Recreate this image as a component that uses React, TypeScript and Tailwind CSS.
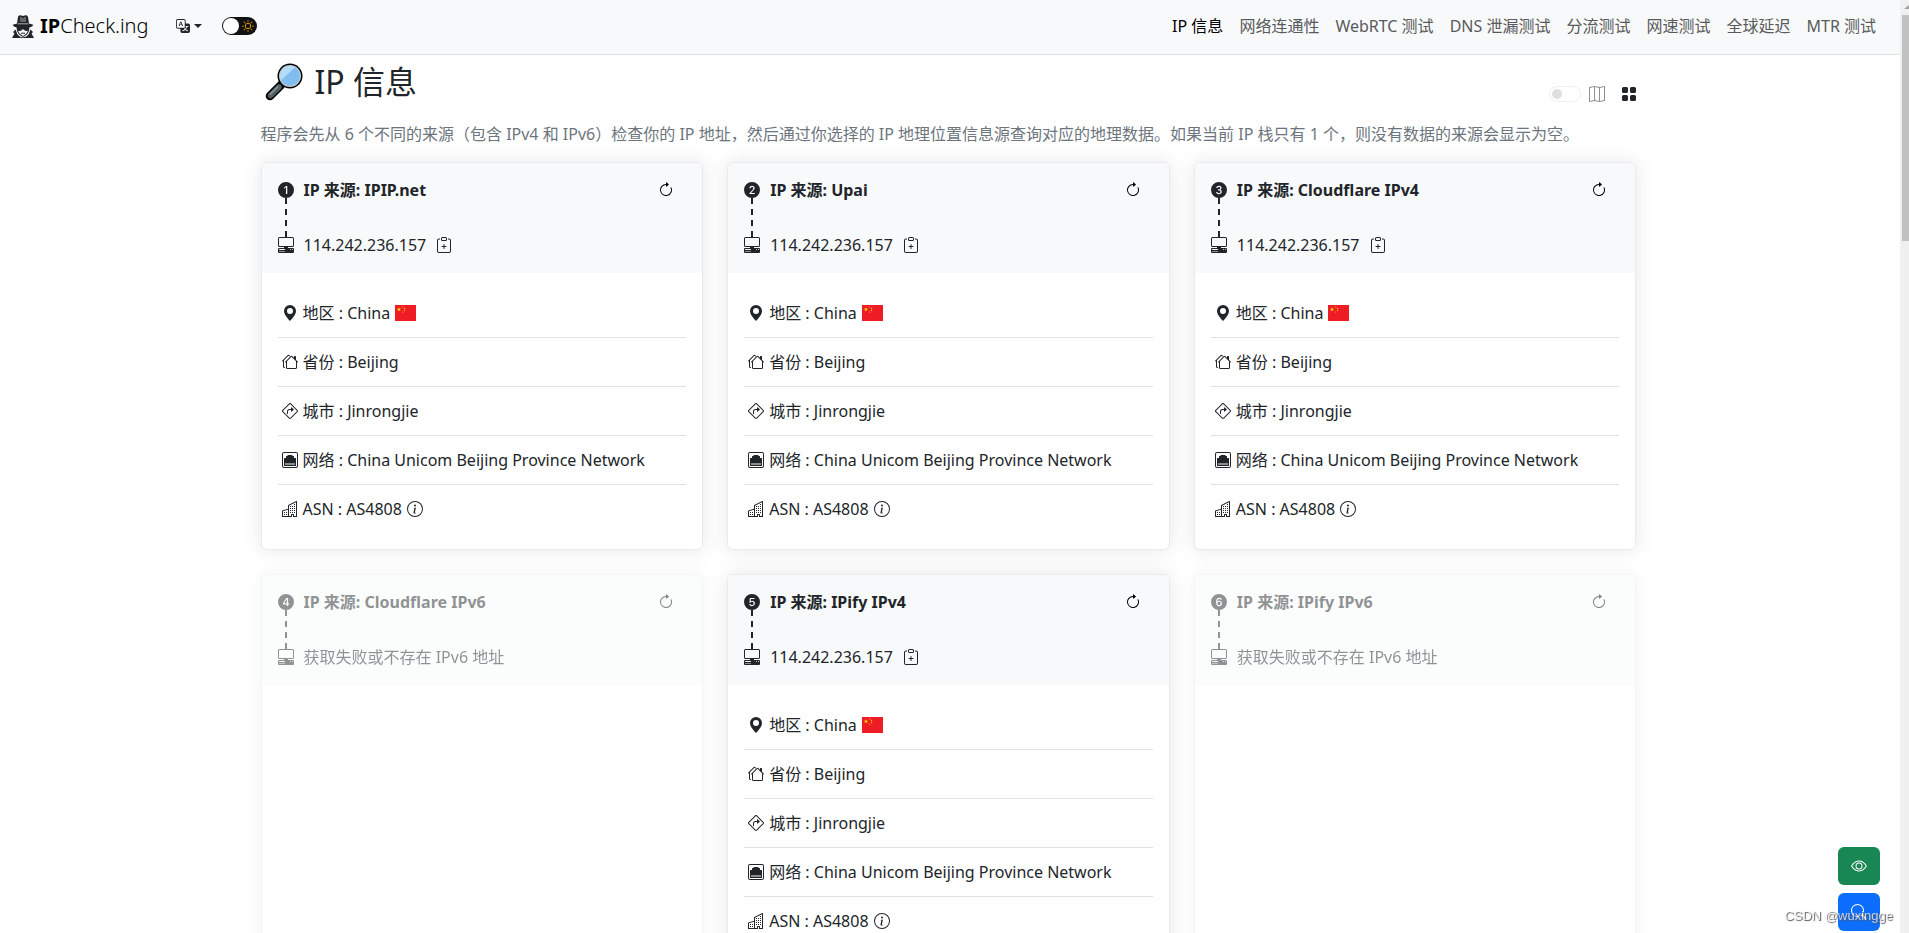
import {useState} from 'react';
import type {IconType} from 'react-icons';
import {
  Bs1CircleFill,
  Bs2CircleFill,
  Bs3CircleFill,
  Bs4CircleFill,
  Bs5CircleFill,
  Bs6CircleFill,
  BsArrowClockwise,
  BsBuildings,
  BsClipboardPlus,
  BsEthernet,
  BsEye,
  BsGeoAltFill,
  BsGridFill,
  BsHouses,
  BsInfoCircle,
  BsMap,
  BsPcDisplayHorizontal,
  BsSearch,
  BsSignTurnRight,
  BsSun,
  BsTranslate,
} from 'react-icons/bs';

const navItems = [
  'IP 信息',
  '网络连通性',
  'WebRTC 测试',
  'DNS 泄漏测试',
  '分流测试',
  '网速测试',
  '全球延迟',
  'MTR 测试',
];

type Source = {
  icon: IconType;
  name: string;
  ip?: string;
};

const sources: Source[] = [
  {icon: Bs1CircleFill, name: 'IPIP.net', ip: '114.242.236.157'},
  {icon: Bs2CircleFill, name: 'Upai', ip: '114.242.236.157'},
  {icon: Bs3CircleFill, name: 'Cloudflare IPv4', ip: '114.242.236.157'},
  {icon: Bs4CircleFill, name: 'Cloudflare IPv6'},
  {icon: Bs5CircleFill, name: 'IPify IPv4', ip: '114.242.236.157'},
  {icon: Bs6CircleFill, name: 'IPify IPv6'},
];

const details: {icon: IconType; label: string; value: string}[] = [
  {icon: BsGeoAltFill, label: '地区', value: 'China'},
  {icon: BsHouses, label: '省份', value: 'Beijing'},
  {icon: BsSignTurnRight, label: '城市', value: 'Jinrongjie'},
  {
    icon: BsEthernet,
    label: '网络',
    value: 'China Unicom Beijing Province Network',
  },
  {icon: BsBuildings, label: 'ASN', value: 'AS4808'},
];

const Logo = () => (
  <svg viewBox="0 0 22 23" className="h-[23px] w-[22px]" aria-hidden="true">
    {/* hat */}
    <path
      fill="#212529"
      d="M5 8.500L6 2Q6.500 0 8.500 .3L11 1l2.500-.7Q15.500 0 16 2l1 6.500q3 .5 4.500 1.500-1.500 2-4.500 2.500H5Q2 12 .5 10 2 9 5 8.500z"
    />
    <path
      stroke="#f8f9fa"
      strokeWidth=".8"
      d="M9 2v5M13 2v5M11 3v4M5.500 8.800h11"
      opacity=".8"
    />
    {/* head and glasses */}
    <path
      fill="#212529"
      d="M4.500 12h13l-.5 4-2 3.500-4 2.500-4-2.500-2-3.500z"
    />
    <path
      fill="#f8f9fa"
      d="M6 15.500q2.500 1.500 4.200-1h1.600q1.700 2.500 4.200 1l-1.500 3-3.500 2.500-3.500-2.500z"
    />
    <path stroke="#212529" strokeWidth="1" d="M9 18.200h4" />
    {/* coat */}
    <path
      fill="#212529"
      d="M3.500 14.500L1 17l1.500 1.500L0 23h9.500L5.500 19.500zM18.500 14.500L21 17l-1.500 1.500L22 23h-9.500l4-3.500zM8.500 21.500l2.500 1 2.500-1V23h-5z"
    />
  </svg>
);

const Flag = () => (
  <svg viewBox="0 0 21 16" className="h-4 w-[21px]" aria-hidden="true">
    <path fill="#ee1c25" d="M0 0h21v16H0z" />
    <path
      fill="#ffde00"
      d="M4 2.200l.6 1.500h1.600L4.900 4.700l.5 1.600L4 5.300 2.600 6.300l.5-1.600-1.300-1h1.600z"
    />
    <g fill="#ffde00">
      <circle cx="7.800" cy="2" r=".6" />
      <circle cx="9.600" cy="3.400" r=".6" />
      <circle cx="9.600" cy="5.400" r=".6" />
      <circle cx="7.800" cy="7" r=".6" />
    </g>
  </svg>
);

const Magnifier = () => (
  <svg viewBox="0 0 38 38" className="size-[38px]" aria-hidden="true">
    <path
      d="M16 22L5 33"
      stroke="#000"
      strokeWidth="8.500"
      strokeLinecap="round"
    />
    <path
      d="M14 24L5.500 32.500"
      stroke="#546066"
      strokeWidth="5.500"
      strokeLinecap="round"
    />
    <path d="M13 23.500L5 31.500" stroke="#8b989e" strokeWidth="1.500" />
    <circle cx="25" cy="13" r="12.500" fill="#000" />
    <circle cx="25" cy="13" r="11" fill="#c5cdd1" />
    <circle cx="25" cy="13" r="10" fill="#82bdf0" />
    <path d="M16 17.500A10 10 0 0 1 30 4.300z" fill="#b3dcf7" />
  </svg>
);

const Navbar = () => {
  const [dark, setDark] = useState(false);
  return (
    <header className="flex h-[55px] items-center border-b border-[#dee2e6] bg-[#f8f9fa] px-3 pb-[2px]">
      <a href="#" className="flex items-center gap-[6px] text-xl text-black">
        <Logo />
        <span className="font-light">
          <b className="font-bold">IP</b>Check.ing
        </span>
      </a>
      <button className="ml-7 flex items-center gap-1" aria-label="Language">
        <BsTranslate className="size-[14px]" />
        <span className="border-x-4 border-t-4 border-x-transparent border-t-[#212529]" />
      </button>
      <label className="relative ml-5 flex">
        <input
          type="checkbox"
          aria-label="Dark mode"
          checked={dark}
          onChange={(e) => setDark(e.target.checked)}
          className="h-[18px] w-[35px] appearance-none rounded-full bg-[#111]"
        />
        <span className="absolute top-px left-px size-4 rounded-full bg-white" />
        <BsSun className="absolute top-[3px] right-[3px] size-3 text-[#ffa500]" />
      </label>
      <nav className="mr-3 ml-auto flex gap-4">
        {navItems.map((item, i) => (
          <a
            key={item}
            href="#"
            className={i === 0 ? 'text-black' : 'text-[#595a5b]'}
          >
            {item}
          </a>
        ))}
      </nav>
    </header>
  );
};

const SourceCard = ({icon: Icon, name, ip}: Source) => (
  <article
    className={`overflow-hidden rounded-md border border-[#e9eaeb] bg-white shadow-[0_0_20px_rgba(0,0,0,0.1)] ${
      ip ? '' : 'opacity-50'
    }`}
  >
    <div
      className={`flex h-[110px] flex-col justify-between px-4 pt-[15px] pb-4 ${
        ip ? 'bg-[#f8f9fb]' : 'bg-[#f7fbf9]'
      }`}
    >
      <div className="flex h-6 items-center">
        <span className="relative mr-[10px] flex">
          <Icon />
          <span className="absolute top-4 left-[7px] h-10 w-[2px] bg-[repeating-linear-gradient(to_bottom,#212529_0_6px,transparent_6px_11px)]" />
        </span>
        <h3 className="font-bold">IP 来源: {name}</h3>
        <button className="mr-3 ml-auto" aria-label={`Refresh ${name}`}>
          <BsArrowClockwise className="text-black" />
        </button>
      </div>
      <div className="flex h-6 items-center">
        <BsPcDisplayHorizontal className="mr-[10px]" />
        <span>{ip ?? '获取失败或不存在 IPv6 地址'}</span>
        {ip && (
          <button className="ml-[10px]" aria-label="Copy">
            <BsClipboardPlus />
          </button>
        )}
      </div>
    </div>
    {ip && (
      <ul className="p-4">
        {details.map(({icon: DetailIcon, label, value}) => (
          <li
            key={label}
            className="flex h-[49px] items-center gap-[5px] border-b border-[#dee2e6] px-1 last:h-12 last:border-b-0"
          >
            <DetailIcon />
            <span>
              {label} : {value}
            </span>
            {label === '地区' && <Flag />}
            {label === 'ASN' && <BsInfoCircle />}
          </li>
        ))}
      </ul>
    )}
  </article>
);

const App = () => {
  const [map, setMap] = useState(false);
  return (
    <div className="flex h-screen overflow-hidden bg-white font-['Noto_Sans','Noto_Sans_CJK_SC',sans-serif] text-base text-[#212529]">
      <div className="min-w-0 flex-1">
        <Navbar />
        <div className="pr-[3px]">
          <main className="mx-auto max-w-[1376px]">
            <div className="flex h-[65px] justify-between">
              <h1 className="flex items-center gap-3 pb-3 pl-1 text-[32px]">
                <Magnifier />
                IP 信息
              </h1>
              <div className="flex items-center pt-3">
                <label className="flex items-center gap-2 opacity-50">
                  <span className="relative flex">
                    <input
                      type="checkbox"
                      checked={map}
                      onChange={(e) => setMap(e.target.checked)}
                      aria-label="Map"
                      className="h-4 w-8 appearance-none rounded-full border border-[#dee2e6]"
                    />
                    <span className="absolute top-[3px] left-[3px] size-[10px] rounded-full bg-[#bfbfbf]" />
                  </span>
                  <BsMap />
                </label>
                <button className="ml-4" aria-label="Cards">
                  <BsGridFill />
                </button>
              </div>
            </div>
            <p className="pt-[2px] pb-4 text-[#6c757d]">
              程序会先从 6 个不同的来源（包含 IPv4 和 IPv6）检查你的 IP
              地址，然后通过你选择的 IP
              地理位置信息源查询对应的地理数据。如果当前 IP 栈只有 1
              个，则没有数据的来源会显示为空。
            </p>
            <div className="grid grid-cols-3 gap-6">
              {sources.map((source) => (
                <SourceCard key={source.name} {...source} />
              ))}
            </div>
          </main>
        </div>
      </div>

      <div className="w-[9px] bg-[#f0f0f0] pt-[5px]">
        <svg viewBox="0 0 7 5" className="ml-[2px] h-[5px] w-[7px]">
          <path fill="#a3a3a3" d="M2 4l5-4v4z" />
        </svg>
        <div className="mt-[5px] ml-[2px] h-[226px] bg-[#c1c1c1]" />
      </div>

      <div className="fixed right-[29px] bottom-0 flex flex-col gap-2 pb-[2px] text-white">
        <button
          className="flex h-[38px] w-[42px] items-center justify-center rounded-md bg-[#198754]"
          aria-label="Show"
        >
          <BsEye />
        </button>
        <button
          className="flex h-[38px] w-[42px] items-center justify-center rounded-md bg-[#0d6efd]"
          aria-label="Search"
        >
          <BsSearch />
        </button>
      </div>
      <span className="fixed right-4 bottom-2 font-['Liberation_Sans',sans-serif] text-[13px] text-white/70 [text-shadow:1px_1px_1px_#555]">
        CSDN @wuxingge
      </span>
    </div>
  );
};

export default App;
